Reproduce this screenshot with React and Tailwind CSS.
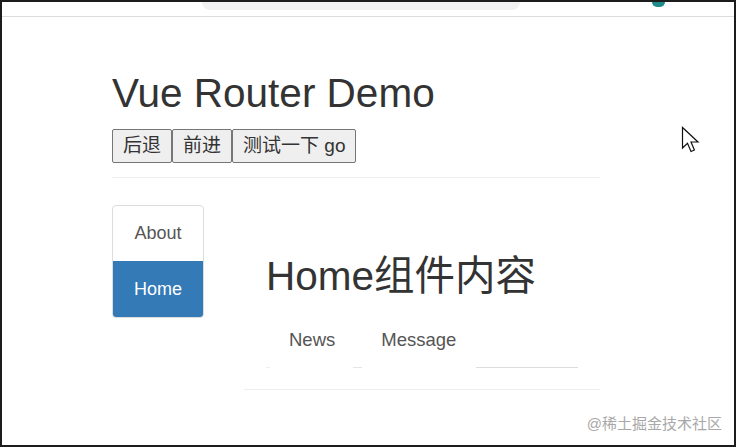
import React from 'react';

const font = "font-['Liberation_Sans','Noto_Sans_CJK_SC',sans-serif]";

function Cursor() {
  return (
    <svg className="absolute left-[679px] top-[124px]" width="20" height="28" viewBox="0 0 20 28">
      <path d="M1.5 1.5 L1.5 22 L6.5 17.2 L10 25.5 L13.4 24 L10 16 L17 16 Z" fill="#fff" stroke="#111" strokeWidth="1.2" strokeLinejoin="miter" />
    </svg>
  );
}

export default function App() {
  return (
    <div className={`w-[736px] h-[447px] bg-white border-2 border-[#1c1c1c] relative overflow-hidden text-[#333] ${font}`}>
      {/* leftover browser chrome */}
      <div className="h-[15px] border-b border-[#dcdcdc] flex items-start">
        <div className="ml-[200px] w-[318px] h-[8px] rounded-b-[8px] bg-[#f1f1f3]" />
        <div className="ml-[132px] w-[13px] h-[5px] rounded-b-full bg-[#1f8a8a]" />
      </div>

      <div className="pl-[110px] pt-[54px]">
        <h1 className="text-[40.5px] leading-[44px] text-[#333]">Vue Router Demo</h1>

        <div className="mt-[14px] flex">
          {['后退', '前进', '测试一下 go'].map((label) => (
            <button
              key={label}
              className="h-[34px] px-[10px] border border-[#767676] bg-[#efefef] rounded-[2px] text-[19px] leading-[20px] text-[#333] flex items-center"
            >
              {label}
            </button>
          ))}
        </div>

        <div className="mt-[14px] w-[488px] border-t border-[#eee]" />

        <div className="mt-[27px] flex gap-[40px]">
          <nav className="w-[92px] border border-[#ddd] rounded-[4px] overflow-hidden self-start">
            <div className="h-[55px] flex items-center justify-center text-[18px] text-[#555]">About</div>
            <div className="h-[56px] flex items-center justify-center text-[18px] text-white bg-[#337ab7]">Home</div>
          </nav>

          <div className="w-[356px]">
            <h2 className="mt-[49px] pl-[22px] text-[40.5px] leading-[44px] text-[#333]">Home组件内容</h2>
            <ul className="mt-[32px] pl-[22px] flex text-[18.5px] leading-[20px] text-[#555]">
              <li className="px-[23px]">News</li>
              <li className="px-[23px]">Message</li>
            </ul>
            <div className="mt-[17px] pl-[22px] flex h-[1px]">
              <div className="w-[4px] bg-[#eee]" />
              <div className="ml-[83px] w-[9px] bg-[#e6e6e6]" />
              <div className="ml-[114px] w-[102px] bg-[#ddd]" />
            </div>
            <div className="mt-[21px] border-t border-[#eee]" />
          </div>
        </div>
      </div>

      <Cursor />
      <div className="absolute right-[12px] top-[413px] text-[15px] leading-[18px] text-[#a8a8a8]">@稀土掘金技术社区</div>
    </div>
  );
}
